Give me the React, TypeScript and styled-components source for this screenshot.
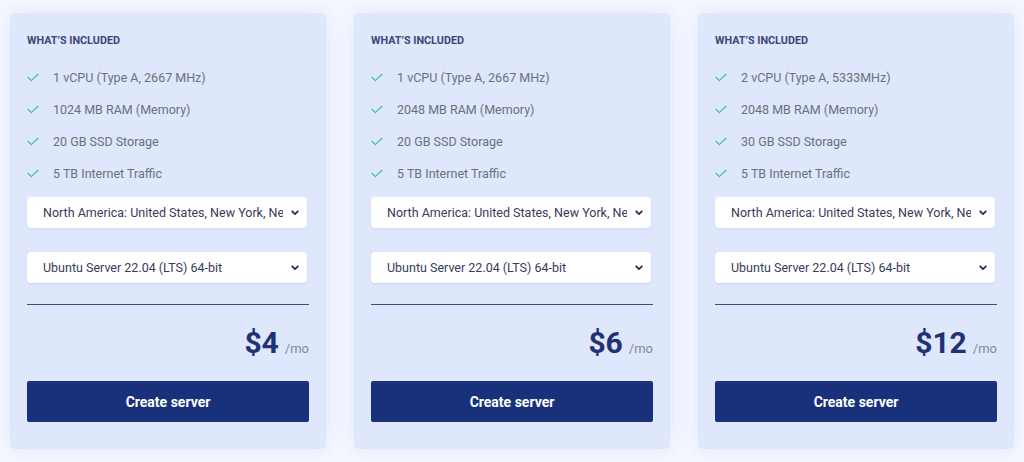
import styled, { createGlobalStyle } from 'styled-components';

const GlobalStyle = createGlobalStyle`
	html, body {
		margin: 0;
		padding: 0;
		background: #f7f9fe;
		font-family: Roboto, 'Liberation Sans', sans-serif;
	}
`;

const Page = styled.main`
	display: flex;
	gap: 28px;
	padding: 13px 10px;
	width: 1024px;
	box-sizing: border-box;
`;

const Card = styled.section`
	width: 316px;
	box-sizing: border-box;
	padding: 22px 17px 27px;
	background: #dee7fb;
	border-radius: 5px;
	box-shadow: 0 0 24px rgba(200, 214, 248, 0.55);
	display: flex;
	flex-direction: column;
`;

const Heading = styled.h3`
	margin: 0;
	font-size: 10.8px;
	line-height: 12px;
	font-weight: 700;
	color: #3a4677;
	text-transform: uppercase;
`;

const Features = styled.ul`
	list-style: none;
	margin: 14px 0 8px;
	padding: 0;
`;

const Feature = styled.li`
	display: flex;
	align-items: center;
	height: 32px;
	gap: 14px;
	font-size: 12.5px;
	color: #6c707c;
`;

const Check = () => (
	<svg width="12" height="9" viewBox="0 0 12 9" fill="none">
		<path d="M1 4.4 L4.3 7.6 L11 1.2" stroke="#3dbfa8" strokeWidth="1.2" strokeLinecap="round" strokeLinejoin="round" />
	</svg>
);

const Select = styled.div<{ $gap: number }>`
	display: flex;
	align-items: center;
	height: 31px;
	margin: 0 2px ${(p) => p.$gap}px 0;
	padding: 0 8px 0 16px;
	background: #fff;
	border-radius: 4px;
	box-shadow: 0 1px 2px rgba(60, 80, 140, 0.12);
	font-size: 12.5px;
	color: #383b5a;
`;

const SelectText = styled.span`
	flex: 1;
	overflow: hidden;
	white-space: nowrap;
	text-overflow: clip;
	margin-right: 8px;
`;

const Chevron = () => (
	<svg width="8" height="6" viewBox="0 0 8 6" fill="none">
		<path d="M1.2 1.3 L4 4.2 L6.8 1.3" stroke="#2a2f5a" strokeWidth="1.8" strokeLinecap="round" strokeLinejoin="round" />
	</svg>
);

const Divider = styled.hr`
	margin: 0 0 23px;
	border: none;
	border-top: 1px solid #404c80;
`;

const Price = styled.div`
	display: flex;
	justify-content: flex-end;
	align-items: baseline;
	gap: 6px;
	height: 30px;
	line-height: 30px;
	margin-bottom: 23px;
`;

const Amount = styled.span`
	font-size: 30px;
	font-weight: 700;
	color: #1e3274;
`;

const Period = styled.span`
	font-size: 13px;
	color: #858a9c;
`;

const Button = styled.button`
	height: 41px;
	border: none;
	border-radius: 2px;
	background: #18317a;
	color: #fff;
	font-family: inherit;
	font-size: 14px;
	font-weight: 700;
	cursor: pointer;
`;

type Plan = {
	features: string[];
	price: number;
};

const plans: Plan[] = [
	{
		features: ['1 vCPU (Type A, 2667 MHz)', '1024 MB RAM (Memory)', '20 GB SSD Storage', '5 TB Internet Traffic'],
		price: 4,
	},
	{
		features: ['1 vCPU (Type A, 2667 MHz)', '2048 MB RAM (Memory)', '20 GB SSD Storage', '5 TB Internet Traffic'],
		price: 6,
	},
	{
		features: ['2 vCPU (Type A, 5333MHz)', '2048 MB RAM (Memory)', '30 GB SSD Storage', '5 TB Internet Traffic'],
		price: 12,
	},
];

const PlanCard = ({ features, price }: Plan) => (
	<Card>
		<Heading>What’s included</Heading>
		<Features>
			{features.map((f) => (
				<Feature key={f}>
					<Check />
					{f}
				</Feature>
			))}
		</Features>
		<Select $gap={24}>
			<SelectText>North America: United States, New York, New York</SelectText>
			<Chevron />
		</Select>
		<Select $gap={21}>
			<SelectText>Ubuntu Server 22.04 (LTS) 64-bit</SelectText>
			<Chevron />
		</Select>
		<Divider />
		<Price>
			<Amount>${price}</Amount>
			<Period>/mo</Period>
		</Price>
		<Button>Create server</Button>
	</Card>
);

export default function App() {
	return (
		<>
			<GlobalStyle />
			<Page>
				{plans.map((p) => (
					<PlanCard key={p.price} {...p} />
				))}
			</Page>
		</>
	);
}
